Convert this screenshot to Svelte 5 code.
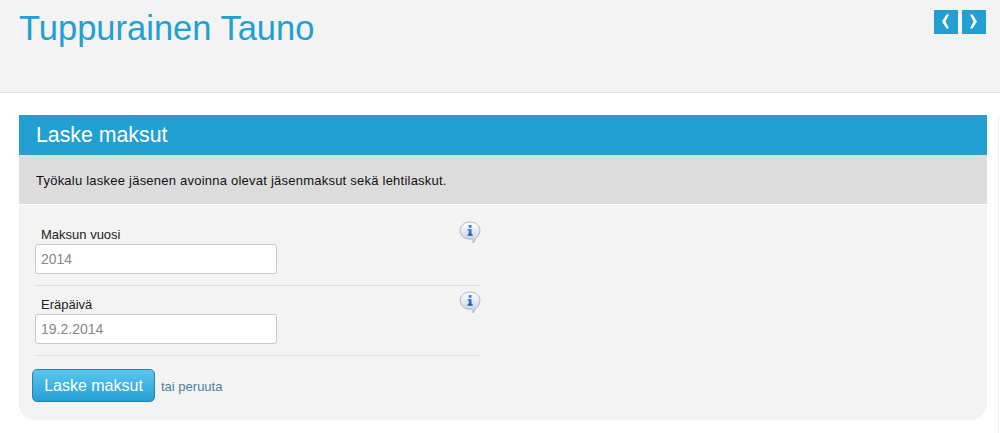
<script>
  const fields = [
    { label: 'Maksun vuosi', value: '2014' },
    { label: 'Eräpäivä', value: '19.2.2014' }
  ];
</script>

<div class="page">
  <header class="top">
    <h1>Tuppurainen Tauno</h1>
    <nav class="pager">
      <a href="#prev" aria-label="Edellinen">
        <svg width="24" height="24" viewBox="0 0 24 24"><path d="M12.5 4.5 H15 L11.5 11.5 L15 18.5 H12.5 L8 11.5 Z" /></svg>
      </a>
      <a href="#next" aria-label="Seuraava">
        <svg width="24" height="24" viewBox="0 0 24 24"><path d="M10.5 4.5 H8 L11.5 11.5 L8 18.5 H10.5 L15 11.5 Z" /></svg>
      </a>
    </nav>
  </header>

  <main class="content">
    <section class="panel">
      <h2>Laske maksut</h2>
      <p class="intro">Työkalu laskee jäsenen avoinna olevat jäsenmaksut sekä lehtilaskut.</p>
      <form class="form">
        {#each fields as f}
          <div class="field">
            <label>
              <span>{f.label}</span>
              <input type="text" value={f.value} />
            </label>
            <svg class="info" width="22" height="22" viewBox="1 0.5 20 20">
              <defs>
                <linearGradient id="bubble" x1="0" y1="0" x2="0" y2="1">
                  <stop offset="0" stop-color="#ffffff" />
                  <stop offset="1" stop-color="#c4cbe4" />
                </linearGradient>
                <linearGradient id="letter" x1="0" y1="0" x2="0" y2="1">
                  <stop offset="0" stop-color="#3d8fe0" />
                  <stop offset="1" stop-color="#1c4fae" />
                </linearGradient>
              </defs>
              <path d="M11 1.5 C16.2 1.5 20 4.6 20 9 C20 12.6 18.4 15 15.8 16.4 C15.6 18 15 19.4 13.6 20.4 C13.9 18.8 13.6 17.6 13 16.8 C12.4 16.9 11.7 17 11 17 C5.8 17 2 13.6 2 9 C2 4.6 5.8 1.5 11 1.5 Z" fill="url(#bubble)" stroke="#b4b4bc" stroke-width="0.9" />
              <rect x="9.8" y="4.2" width="2.6" height="2.4" fill="#2f7fd8" />
              <path d="M8.8 7.8 H12.4 V12.6 H13.4 V14 H8.8 V12.6 H9.8 V9.2 H8.8 Z" fill="url(#letter)" />
            </svg>
          </div>
        {/each}
        <div class="actions">
          <button type="button">Laske maksut</button>
          <span class="cancel">tai <a href="#peruuta">peruuta</a></span>
        </div>
      </form>
    </section>
  </main>
</div>

<style>
  :global(body) {
    margin: 0;
    background: #fff;
    font-family: "Liberation Sans", Arial, sans-serif;
  }

  .page {
    height: 433px;
    overflow: hidden;
    display: flex;
    flex-direction: column;
    width: 1000px;
  }

  .top {
    height: 92px;
    flex-shrink: 0;
    background: #f3f3f3;
    border-bottom: 1px solid #e2e2e2;
    display: flex;
    justify-content: space-between;
    padding: 0 14px 0 19px;
  }

  h1 {
    margin: 10px 0 0;
    font-size: 34.5px;
    line-height: 37px;
    font-weight: normal;
    color: #22a0d2;
  }

  .pager {
    display: flex;
    gap: 4px;
    padding-top: 10px;
  }

  .pager a {
    display: block;
    width: 24px;
    height: 24px;
    background: #22a0d2;
  }

  .pager svg { display: block; }

  .pager path { fill: #fff; }

  .content {
    flex: 1;
    margin: 22px 1px 0 0;
    padding: 0 11px 0 19px;
    border-right: 1px solid #f0f0f0;
  }

  .panel {
    background: #f3f3f3;
    border-radius: 0 0 16px 16px;
    height: 305px;
    overflow: hidden;
  }

  h2 {
    margin: 0;
    height: 40px;
    padding-left: 17px;
    background: #22a0d2;
    color: #fff;
    font-size: 21.3px;
    line-height: 40px;
    font-weight: normal;
  }

  .intro {
    margin: 0;
    height: 49px;
    padding-left: 17px;
    background: #dcdcdc;
    border-bottom: 1px solid #fff;
    color: #111;
    font-size: 13px;
    letter-spacing: 0.23px;
    line-height: 52px;
  }

  .form {
    padding: 0 0 0 13px;
    width: 448px;
  }

  .field {
    position: relative;
    height: 81px;
    width: 445px;
    margin-left: 3px;
    border-bottom: 1px solid #dedede;
    box-sizing: border-box;
    padding-top: 19px;
  }

  .field + .field {
    height: 70px;
    padding-top: 8px;
  }

  .field label { display: block; }

  .field span {
    display: block;
    font-size: 13px;
    line-height: 20px;
    padding-left: 6px;
    color: #222;
    position: relative;
    top: 1px;
  }

  .field input {
    display: block;
    width: 242px;
    height: 30px;
    box-sizing: border-box;
    padding: 0 5px;
    border: 1px solid #c8c8c8;
    border-radius: 3px;
    background: #fff;
    color: #888;
    font: 14px "Liberation Sans", Arial, sans-serif;
  }

  .info {
    position: absolute;
    right: -1px;
    top: 16px;
  }

  .field + .field .info { top: 5px; }

  .actions {
    display: flex;
    align-items: center;
    gap: 6px;
    padding-top: 13px;
  }

  button {
    width: 123px;
    height: 33px;
    padding: 0;
    border: 1px solid #2383ac;
    border-radius: 5px;
    background: linear-gradient(#5cc6f0, #259fd3);
    color: #fff;
    font: 16px "Liberation Sans", Arial, sans-serif;
  }

  .cancel {
    font-size: 13px;
    color: #4f7fa3;
    padding-top: 2px;
  }

  .cancel a {
    color: #4f7fa3;
    text-decoration: none;
  }
</style>
